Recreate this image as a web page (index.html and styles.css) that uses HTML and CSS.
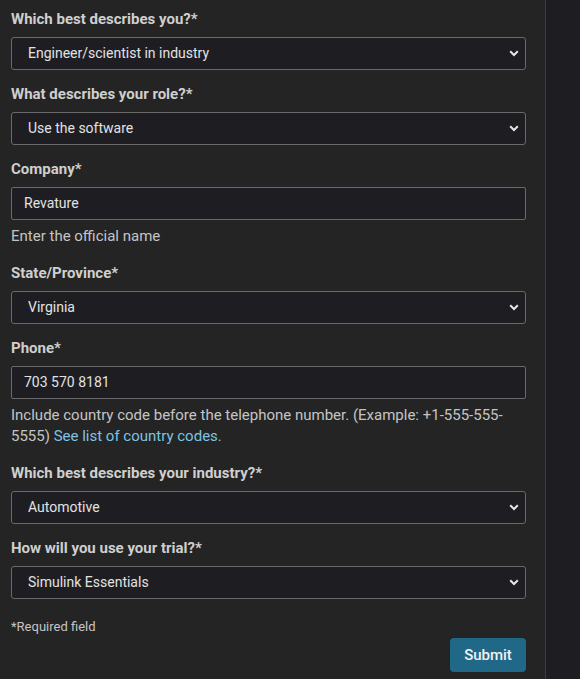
FILE: index.html
```html
<!DOCTYPE html>
<html>
<head>
<meta charset="utf-8">
<link rel="stylesheet" href="styles.css">
</head>
<body>
<div class="page">
  <form class="form">
    <div class="field">
      <label class="label">Which best describes you?*</label>
      <div class="select-wrap">
        <select class="control select"><option>Engineer/scientist in industry</option></select>
        <svg class="chev" width="10" height="7" viewBox="0 0 10 7"><path d="M1.2 1.3 L5 5 L8.8 1.3" fill="none" stroke="#e6e6e6" stroke-width="2"/></svg>
      </div>
    </div>
    <div class="field">
      <label class="label">What describes your role?*</label>
      <div class="select-wrap">
        <select class="control select"><option>Use the software</option></select>
        <svg class="chev" width="10" height="7" viewBox="0 0 10 7"><path d="M1.2 1.3 L5 5 L8.8 1.3" fill="none" stroke="#e6e6e6" stroke-width="2"/></svg>
      </div>
    </div>
    <div class="field">
      <label class="label">Company*</label>
      <input class="control input" value="Revature">
      <div class="help">Enter the official name</div>
    </div>
    <div class="field">
      <label class="label">State/Province*</label>
      <div class="select-wrap">
        <select class="control select"><option>Virginia</option></select>
        <svg class="chev" width="10" height="7" viewBox="0 0 10 7"><path d="M1.2 1.3 L5 5 L8.8 1.3" fill="none" stroke="#e6e6e6" stroke-width="2"/></svg>
      </div>
    </div>
    <div class="field">
      <label class="label">Phone*</label>
      <input class="control input" value="703 570 8181">
      <div class="help">Include country code before the telephone number. (Example: +1-555-555-5555) <a class="link" href="#">See list of country codes.</a></div>
    </div>
    <div class="field">
      <label class="label">Which best describes your industry?*</label>
      <div class="select-wrap">
        <select class="control select"><option>Automotive</option></select>
        <svg class="chev" width="10" height="7" viewBox="0 0 10 7"><path d="M1.2 1.3 L5 5 L8.8 1.3" fill="none" stroke="#e6e6e6" stroke-width="2"/></svg>
      </div>
    </div>
    <div class="field">
      <label class="label">How will you use your trial?*</label>
      <div class="select-wrap">
        <select class="control select"><option>Simulink Essentials</option></select>
        <svg class="chev" width="10" height="7" viewBox="0 0 10 7"><path d="M1.2 1.3 L5 5 L8.8 1.3" fill="none" stroke="#e6e6e6" stroke-width="2"/></svg>
      </div>
    </div>
    <div class="required">*Required field</div>
    <div class="actions">
      <button type="button" class="submit">Submit</button>
    </div>
  </form>
  <aside class="side"></aside>
</div>
</body>
</html>
```

FILE: styles.css
```css
html, body {
  margin: 0;
  padding: 0;
  background: #242424;
  height: 100%;
}
body {
  font-family: Roboto, "Liberation Sans", Arial, sans-serif;
  color: #d4d4d4;
  font-size: 15px;
  overflow: hidden;
}
.page {
  display: flex;
  height: 679px;
}
.form {
  width: 515px;
  padding: 9px 19px 0 11px;
  flex: none;
  display: flex;
  flex-direction: column;
}
.side {
  flex: 1;
  background: #1e1e22;
  border-left: 1px solid #3c3c3c;
}
.field {
  display: flex;
  flex-direction: column;
  margin-bottom: 14px;
}
.label {
  font-weight: 700;
  font-size: 15px;
  line-height: 20px;
  color: #cfcfcf;
  margin-bottom: 8px;
}
.select-wrap {
  position: relative;
}
.control {
  box-sizing: border-box;
  width: 515px;
  height: 33px;
  margin: 0;
  background: #1e1e22;
  border: 1px solid #6a6a6a;
  border-radius: 3px;
  color: #e2e2e2;
  font-family: Roboto, "Liberation Sans", Arial, sans-serif;
  font-size: 14px;
  line-height: 31px;
  padding-bottom: 1px;
  outline: none;
}
.select {
  -webkit-appearance: none;
  appearance: none;
  padding: 0 30px 1px 16px;
}
.input {
  padding: 0 12px 1px;
  border-radius: 2px;
}
.chev {
  position: absolute;
  right: 7px;
  top: 13px;
  pointer-events: none;
}
.help {
  margin-top: 6px;
  line-height: 21px;
  color: #c4c4c4;
  font-size: 15px;
  padding-right: 20px;
  margin-bottom: 2px;
}
.link {
  color: #7cc3e3;
  text-decoration: none;
}
.required {
  font-size: 13px;
  color: #c4c4c4;
  line-height: 16px;
  margin-top: 6px;
}
.actions {
  display: flex;
  justify-content: flex-end;
  margin-top: 3px;
}
.submit {
  width: 76px;
  height: 34px;
  background: #1f6888;
  color: #f2f2f2;
  border: none;
  border-radius: 4px;
  font-family: Roboto, "Liberation Sans", Arial, sans-serif;
  font-size: 15px;
  font-weight: 500;
}
```
